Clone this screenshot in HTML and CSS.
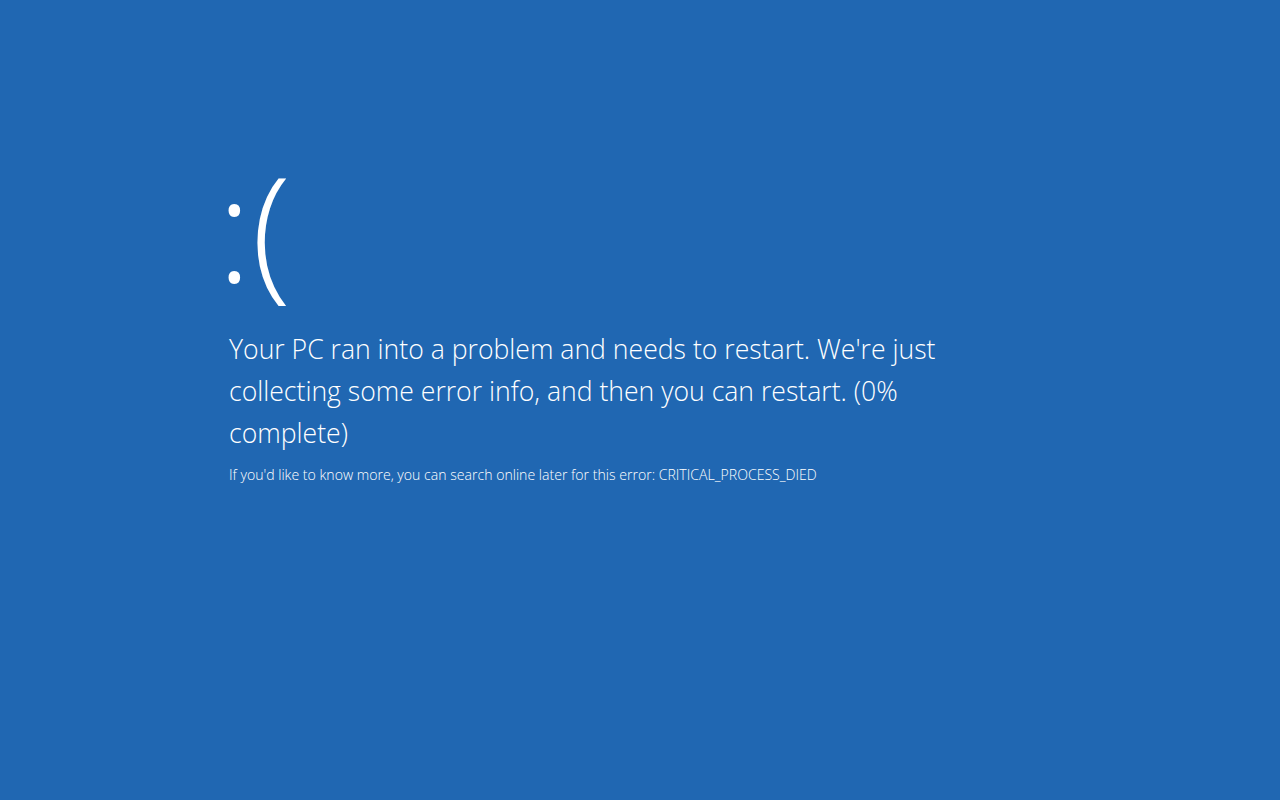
FILE: index.html
```html
<!DOCTYPE html>
<html lang="en">
<head>
    <meta charset="UTF-8">
    <meta name="viewport" content="width=device-width, initial-scale=1.0">
    <title>Restart</title>
    <link rel="stylesheet" href="styles.css">
</head>
<body>
    <main class="screen">
        <div class="face">:(</div>
        <p class="message">Your PC ran into a problem and needs to restart. We're just collecting some error info, and then you can restart. (0% complete)</p>
        <p class="details">If you'd like to know more, you can search online later for this error: CRITICAL_PROCESS_DIED</p>
    </main>
</body>
</html>
```

FILE: styles.css
```css
/* Global Styles */
* {
    margin: 0;
    padding: 0;
    box-sizing: border-box;
    font-family: 'Open Sans', 'Noto Sans', sans-serif;
}

html, body {
    height: 100%;
}

body {
    background: #2067b2;
    color: #ffffff;
}

/* Main block */
.screen {
    padding: 158px 0 0 229px;
    width: 960px;
}

/* Sad face */
.face {
    font-size: 145px;
    font-weight: 300;
    line-height: 138px;
    margin-left: -12px;
    height: 170px;
}

/* Main message */
.message {
    font-size: 26.6px;
    font-weight: 300;
    line-height: 42px;
    width: 720px;
}

/* Small details */
.details {
    font-size: 14.1px;
    font-weight: 300;
    margin-top: 11px;
}
```
